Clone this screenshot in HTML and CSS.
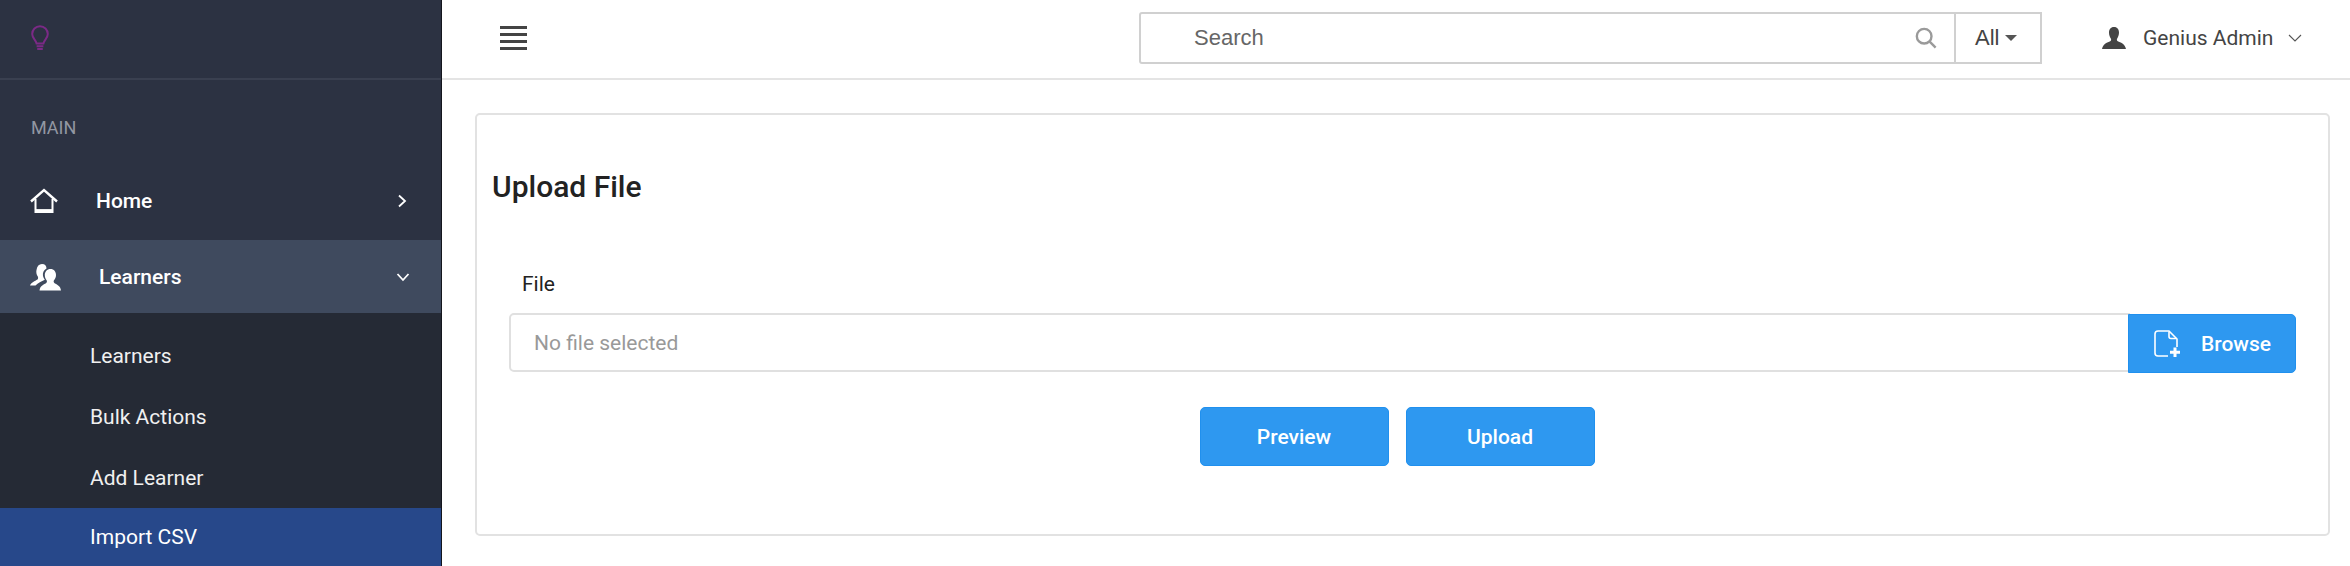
FILE: index.html
```html
<!DOCTYPE html>
<html lang="en">
<head>
    <meta charset="UTF-8">
    <title>Upload File</title>
    <link rel="stylesheet" href="styles.css">
</head>
<body>
    <div class="app">
        <aside class="sidebar">
            <div class="brand">
                <svg class="brand-icon" viewBox="0 0 18 27" fill="none" stroke="#7b2a86" stroke-width="2">
                    <path d="M5.6 18.5C5 15 1.2 13.5 1.2 9A7.8 7.8 0 0 1 16.8 9C16.8 13.5 13 15 12.4 18.5Z"/>
                    <path d="M5.6 21.2H12.4M6.2 24H11.8"/>
                </svg>
            </div>
            <div class="nav-title">MAIN</div>
            <a class="nav-item">
                <svg class="nav-icon" viewBox="0 0 28 26" fill="none" stroke="#fff" stroke-width="2.4">
                    <path d="M1 13.5L14 2L27 13.5"/>
                    <path d="M5.5 11V24H22.5V11" stroke-width="2"/>
                    <path d="M5.5 22.8H22.5" stroke-width="3.4"/>
                </svg>
                <span class="nav-label">Home</span>
                <svg class="nav-arrow" viewBox="0 0 10 14" fill="none" stroke="#fff" stroke-width="1.8"><path d="M2 1.5L8 7L2 12.5"/></svg>
            </a>
            <a class="nav-item nav-item-open">
                <svg class="nav-icon nav-icon-people" viewBox="0 0 32 28" fill="#fff">
                    <path d="M12 1C15 1 16.5 3 16.5 5.5C13.5 7 12.5 10 13 13C13.3 14.5 14 15.8 14.8 16.8C11.5 18.2 8 20 5.5 22.5L0 22.5C1 19.5 5 18 7.5 16.5C8.5 15.8 8.2 14 7.5 13C6.5 11.5 6 9 6.5 7C7 3 9 1 12 1Z"/>
                    <path d="M20.5 6C24 6 26 8.7 26 12C26 14.5 25 16 24 17.3C23.4 18.2 23.6 19.5 24.6 20.2C27 21.6 30.5 22.8 31 27.5H9.5C10 22.8 13.5 21.6 16 20.2C17 19.5 17.2 18.2 16.6 17.3C15.6 16 14.8 14.5 14.8 12C14.8 8.7 17 6 20.5 6Z"/>
                </svg>
                <span class="nav-label">Learners</span>
                <svg class="nav-arrow nav-arrow-down" viewBox="0 0 14 10" fill="none" stroke="#fff" stroke-width="1.8"><path d="M1.5 2L7 8L12.5 2"/></svg>
            </a>
            <div class="subnav">
                <a class="subnav-item">Learners</a>
                <a class="subnav-item">Bulk Actions</a>
                <a class="subnav-item">Add Learner</a>
                <a class="subnav-item subnav-item-active">Import CSV</a>
            </div>
        </aside>

        <div class="main">
            <header class="topbar">
                <div class="hamburger">
                    <span></span><span></span><span></span><span></span>
                </div>
                <div class="search">
                    <div class="search-box">
                        <span class="search-text">Search</span>
                        <svg class="search-icon" viewBox="0 0 24 24" fill="none" stroke="#9a9a9a" stroke-width="2.6">
                            <circle cx="10" cy="10" r="8"/>
                            <path d="M16 16L22.5 22.5"/>
                        </svg>
                    </div>
                    <div class="search-filter">All<span class="caret"></span></div>
                </div>
                <div class="user">
                    <svg class="user-icon" viewBox="0 0 24 22" fill="#444">
                        <path d="M12 0C15.5 0 17 2.6 17 5.6C17 8 16.2 10 15.2 11.4C14.6 12.4 14.8 13.6 15.8 14.2C18.4 15.6 23 16.4 24 22H0C1 16.4 5.6 15.6 8.2 14.2C9.2 13.6 9.4 12.4 8.8 11.4C7.8 10 7 8 7 5.6C7 2.6 8.5 0 12 0Z"/>
                    </svg>
                    <span class="user-name">Genius Admin</span>
                    <svg class="user-arrow" viewBox="0 0 14 8" fill="none" stroke="#555" stroke-width="1.1"><path d="M1 1L7 7L13 1"/></svg>
                </div>
            </header>

            <section class="content">
                <div class="card">
                    <h2 class="card-title">Upload File</h2>
                    <div class="form">
                        <label class="form-label">File</label>
                        <div class="file-row">
                            <div class="file-input">No file selected</div>
                            <button class="btn btn-browse">
                                <svg class="browse-icon" viewBox="0 0 26 28" fill="none" stroke="#fff" stroke-width="1.6">
                                    <path d="M14 26H4A3 3 0 0 1 1 23V4A3 3 0 0 1 4 1H15L23 9V17"/>
                                    <path d="M15 1.5V6.5A2 2 0 0 0 17 8.5H22.5"/>
                                    <path d="M21 17.5V27M16 22.2H26" stroke-width="3"/>
                                </svg>
                                <span>Browse</span>
                            </button>
                        </div>
                        <div class="form-actions">
                            <button class="btn btn-action">Preview</button>
                            <button class="btn btn-action">Upload</button>
                        </div>
                    </div>
                </div>
            </section>
        </div>
    </div>
</body>
</html>
```

FILE: styles.css
```css
* {
    box-sizing: border-box;
}
body {
    margin: 0;
    font-family: Roboto, sans-serif;
    background-color: #fff;
    overflow: hidden;
}
.app {
    display: flex;
    height: 566px;
}

/* sidebar */
.sidebar {
    width: 442px;
    flex-shrink: 0;
    background-color: #2c3242;
    border-right: 1px solid #14161d;
    color: #fff;
    overflow: hidden;
}
.brand {
    height: 80px;
    padding: 25px 0 0 31px;
    border-bottom: 2px solid #3a4050;
}
.brand-icon {
    display: block;
    width: 18px;
    height: 27px;
}
.nav-title {
    height: 81px;
    padding: 38px 0 0 31px;
    font-size: 18px;
    line-height: 20px;
    color: #9297a2;
}
.nav-item {
    display: flex;
    align-items: center;
    height: 79px;
    padding: 0 34px 0 30px;
    font-size: 21px;
    font-weight: 500;
}
.nav-item-open {
    height: 73px;
    background-color: #3f4a5e;
    padding-right: 31px;
}
.nav-icon {
    width: 28px;
    height: 26px;
    flex-shrink: 0;
}
.nav-icon-people {
    width: 32px;
    height: 28px;
    margin-right: -1px;
}
.nav-label {
    flex: 1;
    margin-left: 38px;
}
.nav-arrow {
    width: 10px;
    height: 14px;
}
.nav-arrow-down {
    width: 14px;
    height: 10px;
}
.subnav {
    background-color: #252a35;
    height: 253px;
    padding-top: 12px;
}
.subnav-item {
    display: flex;
    align-items: center;
    height: 61px;
    padding-left: 90px;
    font-size: 21px;
    color: #f0f0f0;
}
.subnav-item-active {
    height: 58px;
    background-color: #27488a;
    color: #fff;
}

/* top bar */
.main {
    flex: 1;
    min-width: 0;
}
.topbar {
    display: flex;
    align-items: center;
    height: 80px;
    padding: 0 0 2px 58px;
    border-bottom: 2px solid #e4e4e4;
}
.hamburger {
    display: flex;
    flex-direction: column;
    gap: 4px;
    width: 27px;
}
.hamburger span {
    height: 3px;
    background-color: #444;
}
.search {
    display: flex;
    height: 52px;
    margin-left: 612px;
}
.search-box {
    display: flex;
    align-items: center;
    justify-content: space-between;
    width: 817px;
    padding: 0 17px 0 53px;
    border: 2px solid #d0d0d0;
    border-radius: 3px 0 0 3px;
    font-family: "Liberation Sans", sans-serif;
    font-size: 22px;
    color: #666;
}
.search-icon {
    width: 22px;
    height: 22px;
}
.search-filter {
    display: flex;
    align-items: center;
    width: 86px;
    padding-left: 19px;
    border: 2px solid #d0d0d0;
    border-left: none;
    font-family: "Liberation Sans", sans-serif;
    font-size: 22px;
    color: #444;
}
.caret {
    width: 0;
    height: 0;
    margin-left: 6px;
    border-left: 6px solid transparent;
    border-right: 6px solid transparent;
    border-top: 6px solid #555;
}
.user {
    display: flex;
    align-items: center;
    margin-left: 60px;
    color: #444;
    font-size: 21px;
}
.user-icon {
    width: 24px;
    height: 22px;
}
.user-name {
    margin-left: 17px;
}
.user-arrow {
    width: 14px;
    height: 8px;
    margin-left: 15px;
}

/* card */
.content {
    padding: 33px 20px 0 33px;
}
.card {
    height: 423px;
    padding: 0 15px;
    border: 2px solid #e2e2e2;
    border-radius: 5px;
}
.card-title {
    margin: 0;
    padding-top: 54px;
    font-size: 30px;
    line-height: 36px;
    font-weight: 500;
    color: #222;
}
.form {
    padding: 67px 17px 0 17px;
}
.form-label {
    display: block;
    padding-left: 13px;
    font-size: 21px;
    line-height: 24px;
    color: #222;
}
.file-row {
    display: flex;
    margin-top: 17px;
}
.file-input {
    flex: 1;
    display: flex;
    align-items: center;
    height: 59px;
    padding-left: 23px;
    margin-right: -2px;
    border: 2px solid #e0e0e0;
    border-radius: 5px 0 0 5px;
    font-size: 21px;
    color: #999;
}
.btn {
    border: 1px solid #2090ee;
    background-color: #2e98f0;
    color: #fff;
    font-family: Roboto, sans-serif;
    font-size: 21px;
    font-weight: 500;
    padding: 0;
}
.btn-browse {
    display: flex;
    align-items: center;
    width: 168px;
    height: 59px;
    margin-top: 1px;
    padding-left: 25px;
    border-radius: 0 5px 5px 0;
}
.browse-icon {
    width: 26px;
    height: 28px;
}
.btn-browse span {
    margin-left: 21px;
}
.form-actions {
    display: flex;
    justify-content: center;
    gap: 17px;
    margin: 34px 11px 0 0;
}
.btn-action {
    width: 189px;
    height: 59px;
    border-radius: 5px;
}
```
